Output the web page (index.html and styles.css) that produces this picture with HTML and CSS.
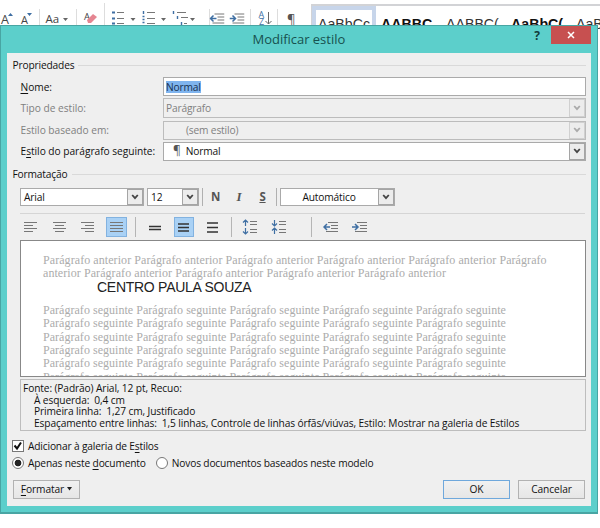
FILE: index.html
```html
<!DOCTYPE html>
<html lang="pt-BR">
<head>
<meta charset="utf-8">
<title>Modificar estilo</title>
<link rel="stylesheet" href="styles.css">
</head>
<body>
<svg class="defs" width="0" height="0">
  <symbol id="chev" viewBox="0 0 8 6"><path d="M1.2 1 4 4.2 6.8 1" fill="none" stroke="currentColor" stroke-width="1.8"/></symbol>
  <symbol id="out" viewBox="0 0 15 12"><path d="M5 1.5h10M8 4.5h7M8 7.5h7M3 10.5h12" stroke="#777"/><path d="M7 6H1M4 3 1 6l3 3" fill="none" stroke="#3f6fa3" stroke-width="1.5"/></symbol>
  <symbol id="in" viewBox="0 0 15 12"><path d="M5 1.5h10M8 4.5h7M8 7.5h7M3 10.5h12" stroke="#777"/><path d="M0 6h6M3 3l3 3-3 3" fill="none" stroke="#3f6fa3" stroke-width="1.5"/></symbol>
</svg>
<div class="ribbon">
  <svg class="tools" width="306" height="30" viewBox="0 0 306 30">
    <g font-family="Open Sans, sans-serif" fill="#444">
      <text x="1" y="24" font-size="12.5">A</text><text x="21" y="24" font-size="11">A</text>
      <text x="45.500" y="22.500" font-size="11.500">Aa</text><text x="84" y="20" font-size="9.500">A</text>
    </g>
    <path d="M8 16l2.500-3 2.500 3zM27 13h5l-2.500 3z" fill="#3f6fa3"/>
    <path d="M63 18h5l-2.500 3zM130.500 18h5l-2.500 3zM161 18h5l-2.500 3zM190 18h5l-2.500 3z" fill="#666"/>
    <path d="M39.500 9v16M76.500 9v16M104.500 3v22M209.500 9v16M250.500 9v16M277.500 9v16" stroke="#ddd"/>
    <path d="M87 20l6-6 4 3-6 6h-3z" fill="#e58591"/>
    <path d="M117 12.500h7M117 18.500h7M117 23.500h7M147 12.500h8M147 18.500h8M147 23.500h8M177 12.500h9M181 17.500h7M184 23.500h3" stroke="#777"/>
    <path d="M112 12.500h3M112 18.500h3M112 23.500h3" stroke="#3f6fa3" stroke-width="2"/>
    <path d="M143.500 11v3M142.500 16.500h2M142.500 19.500h2M142.500 22.500h2M173.500 11v3M177.500 16v3M181.500 22v3" stroke="#3f6fa3" stroke-width="1.400"/>
    <use href="#out" x="209.500" y="12.500" width="15" height="12"/><use href="#in" x="229.500" y="12.500" width="15" height="12"/>
    <g font-family="Open Sans, sans-serif" font-size="9" fill="#3f6fa3"><text x="258.500" y="17.500">A</text><text x="259" y="25">Z</text></g>
    <path d="M268.500 12v12M265.500 21l3 3 3-3" fill="none" stroke="#666"/>
    <text x="287" y="24" font-family="Open Sans, sans-serif" font-size="13" fill="#555">¶</text>
  </svg>
  <div class="gallery">
    <span class="sel">AaBbCc</span><span class="b">AABBC</span><span>AABBC(</span><span class="b">AaBbC(</span><span>AaBbCc</span>
  </div>
</div>
<div class="dialog">
  <div class="title"><span class="title-text">Modificar estilo</span><span class="help">?</span>
    <span class="close"><svg width="8" height="8" viewBox="0 0 8 8"><path d="M1 1l6 6M7 1 1 7" stroke="#fff" stroke-width="1.500"/></svg></span></div>
  <div class="client">
    <div class="group g1"><span>Propriedades</span><i></i></div>
    <div class="fields">
      <label><u>N</u>ome:</label><div class="field"><mark>Normal</mark></div>
      <label class="off">Tipo de estilo:</label><div class="field off">Parágrafo<b class="dd"><svg width="8" height="6"><use href="#chev"/></svg></b></div>
      <label class="off">Estilo baseado em:</label><div class="field off"><span class="ind">(sem estilo)</span><b class="dd"><svg width="8" height="6"><use href="#chev"/></svg></b></div>
      <label>E<u>s</u>tilo do parágrafo seguinte:</label><div class="field"><span class="pil">¶</span><span>Normal</span><b class="dd"><svg width="8" height="6"><use href="#chev"/></svg></b></div>
    </div>
    <div class="group g2"><span>Formatação</span><i></i></div>
    <div class="font-row">
      <div class="combo c1">Arial<b class="dd"><svg width="8" height="6"><use href="#chev"/></svg></b></div>
      <div class="combo c2">12<b class="dd"><svg width="8" height="6"><use href="#chev"/></svg></b></div>
      <i class="sep s1"></i>
      <span class="fb">N</span><span class="fb it">I</span><span class="fb un">S</span>
      <i class="sep s2"></i>
      <div class="combo c3"><span>Automático</span><b class="dd"><svg width="8" height="6"><use href="#chev"/></svg></b></div>
    </div>
    <svg class="bar" width="566" height="27" viewBox="20 213 566 27">
      <path d="M20 213.500h565" stroke="#d5d5d5"/>
      <rect x="106.500" y="217.500" width="20" height="19" fill="#a9d1f5" stroke="#82b2e0"/>
      <rect x="174.500" y="217.500" width="19" height="19" fill="#a9d1f5" stroke="#82b2e0"/>
      <path d="M135.500 217v20M231.500 217v20M311.500 217v20" stroke="#b5b5b5"/>
      <path d="M24 222.500h13M24 225.500h9M24 228.500h13M24 231.500h9M53 222.500h13M55 225.500h9M53 228.500h13M55 231.500h9M81 222.500h13M85 225.500h9M81 228.500h13M85 231.500h9M110 222.500h13M110 225.500h13M110 228.500h13M110 231.500h13" stroke="#777"/>
      <path d="M149 226.500h12M149 229.500h12M178 224h11M178 227.500h11M178 231h11M207 223h11M207 227.500h11M207 232h11" stroke="#333" stroke-width="1.500"/>
      <path d="M250 221.500h7M250 224.500h7M250 229.500h7M250 232.500h7M279 221.500h7M279 224.500h7M279 229.500h7M279 232.500h7" stroke="#777"/>
      <path d="M245.500 226v-6M243 222.500l2.500-2.500 2.500 2.500M245.500 228v6M243 231.500l2.500 2.500 2.500-2.500M274.500 220v6M272 223.500l2.500 2.500 2.500-2.500M274.500 234v-6M272 230.500l2.500-2.500 2.500 2.500" fill="none" stroke="#3f6fa3" stroke-width="1.200"/>
      <use href="#out" x="323" y="221" width="15" height="12"/><use href="#in" x="352" y="221" width="15" height="12"/>
    </svg>
    <div class="preview">
      <p class="ant">Parágrafo anterior Parágrafo anterior Parágrafo anterior Parágrafo anterior Parágrafo anterior Parágrafo<br>anterior Parágrafo anterior Parágrafo anterior Parágrafo anterior Parágrafo anterior</p>
      <p class="now">CENTRO PAULA SOUZA</p>
      <p class="next">Parágrafo seguinte Parágrafo seguinte Parágrafo seguinte Parágrafo seguinte Parágrafo seguinte<br>Parágrafo seguinte Parágrafo seguinte Parágrafo seguinte Parágrafo seguinte Parágrafo seguinte<br>Parágrafo seguinte Parágrafo seguinte Parágrafo seguinte Parágrafo seguinte Parágrafo seguinte<br>Parágrafo seguinte Parágrafo seguinte Parágrafo seguinte Parágrafo seguinte Parágrafo seguinte<br>Parágrafo seguinte Parágrafo seguinte Parágrafo seguinte Parágrafo seguinte Parágrafo seguinte<br>Parágrafo seguinte Parágrafo seguinte Parágrafo seguinte Parágrafo seguinte Parágrafo seguinte</p>
    </div>
    <div class="desc">
      <div>Fonte: (Padrão) Arial, 12 pt, Recuo:</div>
      <div>À esquerda:&nbsp; 0,4 cm</div>
      <div>Primeira linha:&nbsp; 1,27 cm, Justificado</div>
      <div>Espaçamento entre linhas:&nbsp; 1,5 linhas, Controle de linhas órfãs/viúvas, Estilo: Mostrar na galeria de Estilos</div>
    </div>
    <div class="opt chk"><span class="box"><svg width="10" height="10" viewBox="0 0 10 10"><path d="M1.500 4.500 4 7.500 8 1.500" fill="none" stroke="#111" stroke-width="2"/></svg></span><span>Adicionar à galeria de E<u>s</u>tilos</span></div>
    <div class="opt rad"><span class="radio on"></span><span class="r1">Apenas neste <u>d</u>ocumento</span><span class="radio"></span><span>Novos documentos baseados neste modelo</span></div>
    <div class="buttons">
      <button class="fmt"><span><u>F</u>ormatar</span><svg width="5" height="4" viewBox="0 0 5 4"><path d="M0 0h5L2.500 3.500z" fill="#222"/></svg></button>
      <button class="ok">OK</button><button>Cancelar</button>
    </div>
  </div>
</div>
</body>
</html>
```
FILE: styles.css
```css
* { box-sizing: border-box; }
body { margin: 0; width: 600px; height: 528px; overflow: hidden; background: #fff; font: 10.2px/14px "Open Sans", "Noto Sans", sans-serif; letter-spacing: -.16px; color: #111; position: relative; }
.defs { position: absolute; }
u { text-underline-offset: 1.5px; }
.ribbon { display: flex; height: 30px; letter-spacing: 0; }
.tools { flex: none; margin-right: 5px; }
.gallery { flex: none; width: 289px; display: flex; border-top: 2px solid #d2d3d6; border-left: 1px solid #d2d3d6; margin-top: 4px; overflow: hidden; font: 14.2px/20px "Liberation Sans", sans-serif; color: #333; height: 40px; }
.gallery span { width: 65px; flex: none; padding: 8px 0 0 5px; white-space: nowrap; overflow: hidden; }
.gallery .sel { border: 4px solid #c7d5ea; padding: 4px 0 0 2px; width: 64px; }
.gallery .b { font-weight: bold; color: #111; }
.dialog { position: absolute; left: 0; top: 25px; width: 598px; height: 489px; background: #5ccfcb; border: 1px solid #48a5a3; border-bottom-width: 2px; padding: 0 6px; }
.title { height: 27px; display: flex; align-items: flex-start; }
.title-text { margin-left: 245.5px; width: 282.5px; font-size: 13px; line-height: 27px; color: #17514f; letter-spacing: -.02px; }
.help { font-weight: bold; font-size: 12px; line-height: 19px; width: 17px; color: #113c3b; }
.close { width: 40px; height: 18px; background: #c75050; display: grid; place-items: center; }
.client { width: 584px; height: 453px; background: #efefef; padding: 0 5px; overflow: hidden; }
.group { display: flex; align-items: center; gap: 4px; height: 24px; padding-left: .5px; }
.group i { flex: 1; height: 1px; background: #d9d9d9; }
.fields { display: grid; grid-template-columns: 143px 423px; grid-template-rows: 19px 20px 19px 19px; row-gap: 2.3px; padding-left: 8px; align-items: center; }
.fields label { letter-spacing: -.03px; padding-left: .5px; }
.field, .combo { border: 1px solid #aaa; background: #fff; height: 100%; display: flex; align-items: center; padding-left: 3px; white-space: nowrap; }
.field { padding-left: 2px; }
.field.off { background: #efefef; border-color: #bcbcbc; }
.fields .off { color: #808080; }
mark { background: #7fb4ee; color: #17304d; line-height: 12px; }
.ind { margin-left: 20px; }
.pil { margin: 0 5px 0 7px; font-size: 12px; color: #555; }
.dd { margin-left: auto; width: 16px; height: 100%; border: 1px solid #a5a5a5; background: #ececec; display: grid; place-items: center; color: #444; }
.off .dd { border-color: #d0d0d0; color: #aaa; }
.g2 { height: 27px; }
.font-row { display: flex; height: 18px; margin: 0 0 7px 8px; }
.combo.c1 { width: 124px; margin-right: 3px; }
.combo.c2 { width: 52px; }
.combo.c3 { width: 115px; }
.c3 span { margin-left: 19px; }
.sep { width: 1px; background: #b0b0b0; }
.s1 { margin-left: 3px; }
.s2 { margin: 0 3px 0 2px; }
.fb { width: 24px; margin-right: -.5px; padding-left: 1px; text-align: center; font-weight: bold; font-size: 11.5px; line-height: 18px; color: #555; }
.it { font-family: "Liberation Serif", serif; font-style: italic; font-size: 13px; }
.un { text-decoration: underline; }
.bar { display: block; margin-left: 8px; }
.preview { margin-left: 8px; width: 566px; height: 137px; background: #fff; border: 1px solid #888; overflow: hidden; padding: 13px 0 0 22px; color: #acacac; font: 12px/13.4px "Liberation Serif", serif; letter-spacing: .07px; white-space: nowrap; }
.preview p { margin: 0; }
.preview .next { letter-spacing: .03px; }
.preview .now { font: 14px/16px "Liberation Sans", sans-serif; letter-spacing: -.27px; color: #222; margin: -2px 0 9px 54px; }
.desc { margin: 2px 0 0 8px; width: 566px; height: 52px; border: 1px solid #bdbdbd; padding: 3px 2px 0; line-height: 11.7px; white-space: nowrap; letter-spacing: -.12px; }
.desc div + div { padding-left: 11px; }
.opt { display: flex; align-items: center; white-space: nowrap; }
.chk { height: 14px; margin-top: 8px; gap: 4px; }
.box { width: 12px; height: 12px; border: 1px solid #777; background: #fff; display: grid; place-items: center; }
.rad { height: 14px; margin-top: 3px; gap: 4px; }
.radio { width: 12px; height: 12px; border: 1px solid #777; border-radius: 50%; background: #fff; }
.radio.on { background: radial-gradient(circle, #222 3px, #fff 3.7px); }
.r1 { margin-right: 6px; }
.buttons { display: flex; gap: 8px; margin-top: 10px; padding: 0 1px; }
button { font: inherit; letter-spacing: -.1px; color: inherit; width: 67px; height: 19px; padding: 0; border: 1px solid #b2b2b2; background: linear-gradient(#f1f1f1, #e6e6e6); display: flex; align-items: center; justify-content: center; gap: 3px; }
.fmt { margin-right: auto; }
.ok { border-color: #6fa8dc; }
```
